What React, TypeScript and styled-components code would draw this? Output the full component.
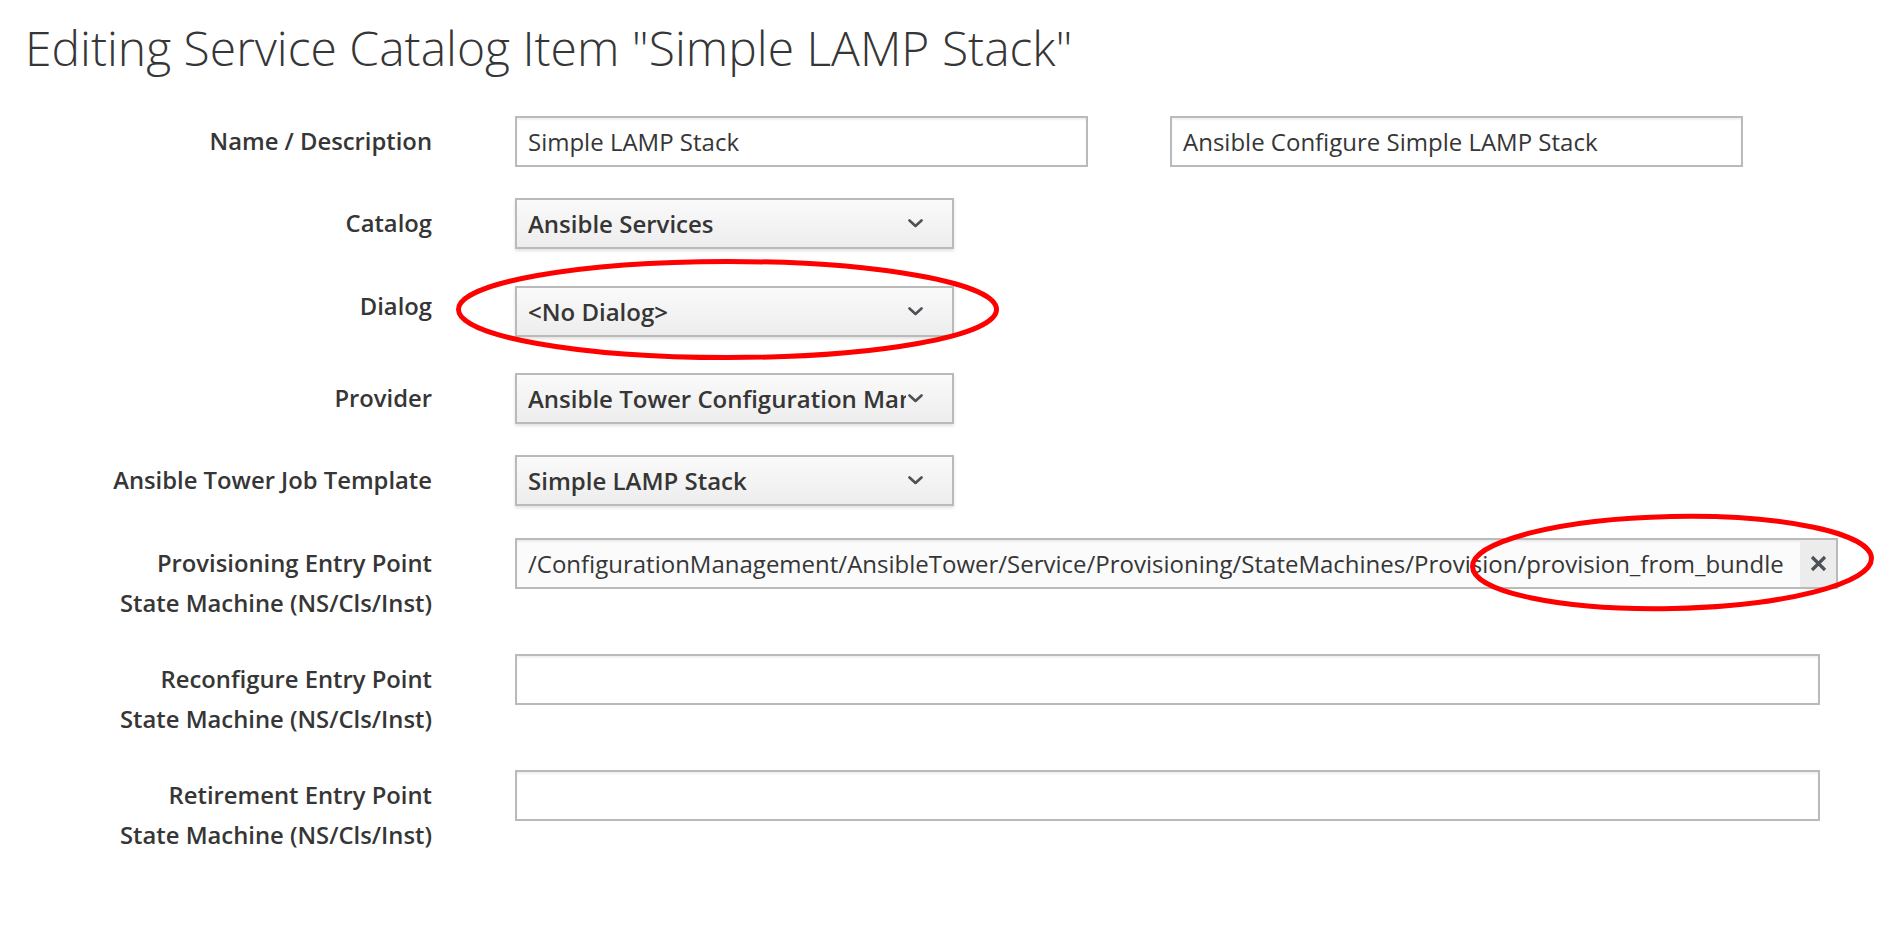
import React from "react";
import styled, { createGlobalStyle } from "styled-components";

const GlobalStyle = createGlobalStyle`
  html, body {
    margin: 0;
    padding: 0;
    background: #ffffff;
  }
  body {
    font-family: "Open Sans", "Noto Sans", "Liberation Sans", sans-serif;
    color: #363636;
  }
`;

const Page = styled.div`
  position: relative;
  width: 1883px;
  height: 928px;
  overflow: hidden;
  padding: 22px 0 0 25px;
  box-sizing: border-box;
`;

const Title = styled.h1`
  margin: 0 0 41px 0;
  font-size: 48px;
  line-height: 52.8px;
  font-weight: 300;
  color: #363636;
  letter-spacing: 0;
  white-space: nowrap;
`;

const Form = styled.div`
  display: flex;
  flex-direction: column;
  margin-left: -25px;
`;

const Row = styled.div<{ $mb: number }>`
  display: grid;
  grid-template-columns: 432px 1fr;
  column-gap: 83px;
  align-items: start;
  margin-bottom: ${(p) => p.$mb}px;
`;

const Label = styled.div<{ $pt?: number }>`
  text-align: right;
  font-size: 23.8px;
  font-weight: 600;
  line-height: 40px;
  padding-top: ${(p) => (p.$pt === undefined ? 5 : p.$pt)}px;
  color: #363636;
  white-space: nowrap;
`;

const Controls = styled.div`
  display: flex;
  gap: 82px;
`;

const TextBox = styled.div<{ $w: number; $bg?: string }>`
  box-sizing: border-box;
  width: ${(p) => p.$w}px;
  height: 51px;
  border: 2px solid #bababa;
  background: ${(p) => p.$bg || "#ffffff"};
  box-shadow: inset 0 2px 2px rgba(3, 3, 3, 0.06);
  display: flex;
  align-items: stretch;
  font-size: 24px;
  line-height: 47px;
  color: #363636;
  white-space: nowrap;
  overflow: hidden;
`;

const BoxText = styled.span`
  flex: 1;
  padding-left: 11px;
  overflow: hidden;
`;

const ClearButton = styled.span`
  width: 36px;
  flex: none;
  background: #ececec;
  display: flex;
  align-items: center;
  justify-content: center;
  color: #4d5258;
`;

const Select = styled.div`
  box-sizing: border-box;
  width: 439px;
  height: 51px;
  border: 2px solid #bababa;
  background: linear-gradient(to bottom, #fafafa 0%, #ededed 100%);
  box-shadow: 0 2px 3px rgba(3, 3, 3, 0.12);
  display: flex;
  align-items: center;
  padding: 0 0 0 11px;
`;

const SelectText = styled.span`
  flex: 1;
  font-size: 24px;
  font-weight: 600;
  line-height: 47px;
  color: #363636;
  white-space: nowrap;
  overflow: hidden;
`;

const Caret = styled.span`
  flex: none;
  width: 46px;
  display: flex;
  align-items: center;
  justify-content: flex-start;
  padding-left: 2px;
  box-sizing: border-box;
`;

const Annotation = styled.svg<{ $x: number; $y: number; $rot?: number }>`
  position: absolute;
  left: ${(p) => p.$x}px;
  top: ${(p) => p.$y}px;
  overflow: visible;
  transform: rotate(${(p) => p.$rot || 0}deg);
  pointer-events: none;
`;

const Chevron = () => (
  <svg width="15" height="9" viewBox="0 0 15 9">
    <polyline
      points="1.5,1.5 7.5,7 13.5,1.5"
      fill="none"
      stroke="#4d5258"
      strokeWidth="2.6"
      strokeLinecap="round"
      strokeLinejoin="round"
    />
  </svg>
);

const Cross = () => (
  <svg width="17" height="17" viewBox="0 0 17 17">
    <path
      d="M2 2 L15 15 M15 2 L2 15"
      stroke="#4d5258"
      strokeWidth="3.2"
      strokeLinecap="butt"
    />
  </svg>
);

const DropDown = ({ value }: { value: string }) => (
  <Select>
    <SelectText>{value}</SelectText>
    <Caret>
      <Chevron />
    </Caret>
  </Select>
);

const RedEllipse = ({
  x,
  y,
  w,
  h,
  rot,
}: {
  x: number;
  y: number;
  w: number;
  h: number;
  rot?: number;
}) => (
  <Annotation $x={x} $y={y} $rot={rot} width={w} height={h} viewBox={`0 0 ${w} ${h}`}>
    <ellipse
      cx={w / 2}
      cy={h / 2}
      rx={w / 2 - 2.5}
      ry={h / 2 - 2.5}
      fill="none"
      stroke="#ff0000"
      strokeWidth="5"
    />
  </Annotation>
);

export default function App() {
  return (
    <>
      <GlobalStyle />
      <Page>
        <Title>Editing Service Catalog Item "Simple LAMP Stack"</Title>
        <Form>
          <Row $mb={31}>
            <Label>Name / Description</Label>
            <Controls>
              <TextBox $w={573}>
                <BoxText>Simple LAMP Stack</BoxText>
              </TextBox>
              <TextBox $w={573}>
                <BoxText>Ansible Configure Simple LAMP Stack</BoxText>
              </TextBox>
            </Controls>
          </Row>
          <Row $mb={37}>
            <Label>Catalog</Label>
            <Controls>
              <DropDown value="Ansible Services" />
            </Controls>
          </Row>
          <Row $mb={36}>
            <Label $pt={0}>Dialog</Label>
            <Controls>
              <DropDown value="<No Dialog>" />
            </Controls>
          </Row>
          <Row $mb={31}>
            <Label>Provider</Label>
            <Controls>
              <DropDown value="Ansible Tower Configuration Manager" />
            </Controls>
          </Row>
          <Row $mb={32}>
            <Label>Ansible Tower Job Template</Label>
            <Controls>
              <DropDown value="Simple LAMP Stack" />
            </Controls>
          </Row>
          <Row $mb={31}>
            <Label>
              Provisioning Entry Point
              <br />
              State Machine (NS/Cls/Inst)
            </Label>
            <Controls>
              <TextBox $w={1323} $bg="#fbfbfb">
                <BoxText>
                  /ConfigurationManagement/AnsibleTower/Service/Provisioning/StateMachines/Provision/provision_from_bundle
                </BoxText>
                <ClearButton>
                  <Cross />
                </ClearButton>
              </TextBox>
            </Controls>
          </Row>
          <Row $mb={31}>
            <Label>
              Reconfigure Entry Point
              <br />
              State Machine (NS/Cls/Inst)
            </Label>
            <Controls>
              <TextBox $w={1305} />
            </Controls>
          </Row>
          <Row $mb={0}>
            <Label>
              Retirement Entry Point
              <br />
              State Machine (NS/Cls/Inst)
            </Label>
            <Controls>
              <TextBox $w={1305} />
            </Controls>
          </Row>
        </Form>
        <RedEllipse x={456} y={259} w={543} h={101} />
        <RedEllipse x={1470} y={514} w={404} h={97} rot={-1.2} />
      </Page>
    </>
  );
}
